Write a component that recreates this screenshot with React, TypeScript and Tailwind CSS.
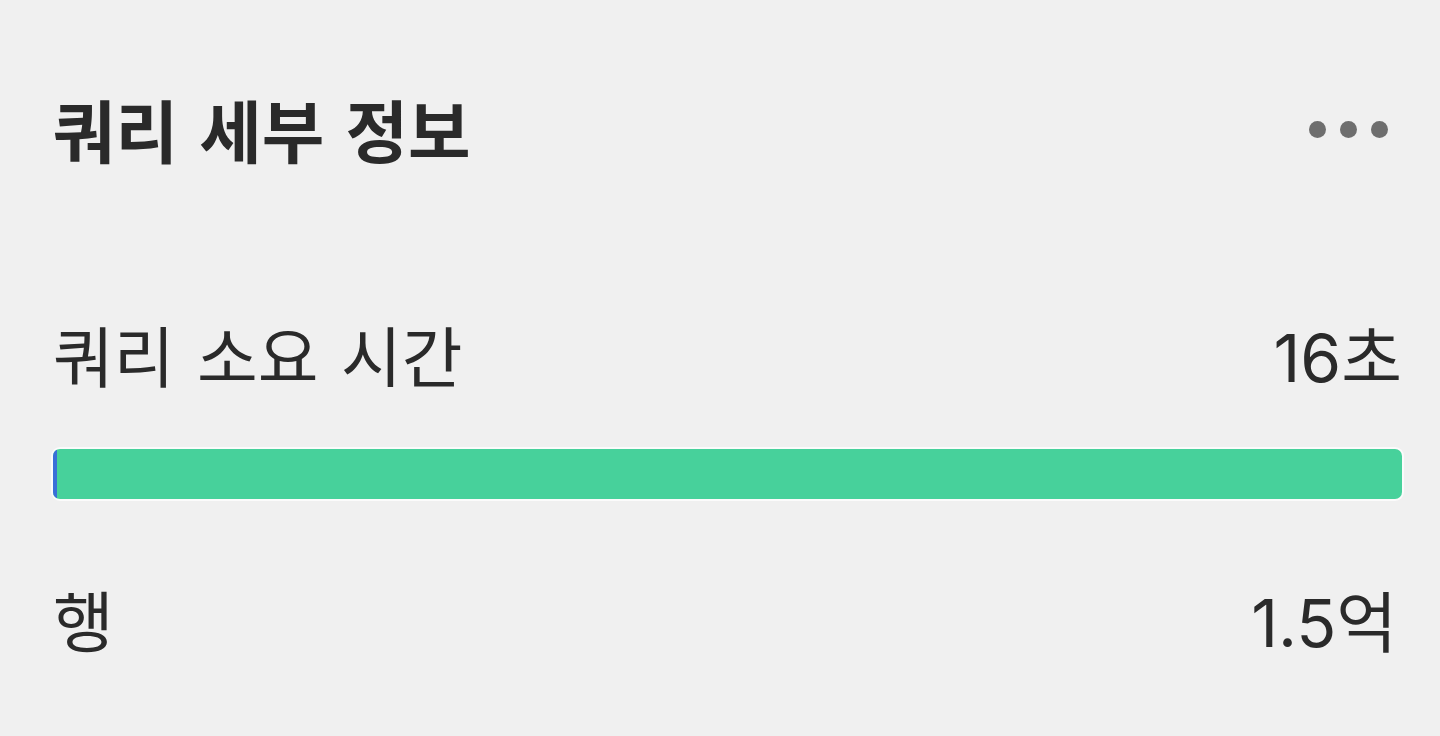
export default function App() {
  const font = { fontFamily: 'Inter, "Noto Sans CJK KR", "Noto Sans", sans-serif' };
  return (
    <div
      className="min-h-screen w-full bg-[#f0f0f0] pl-[53px] pr-[38px] pt-[97px] text-[#2a2a2a]"
      style={font}
    >
      {/* Header */}
      <div className="flex items-center justify-between">
        <h1 className="text-[68px] font-bold leading-[72px] [word-spacing:5px]">쿼리 세부 정보</h1>
        <div className="mb-[8px] mr-[14px] flex items-center gap-[14px]">
          <span className="h-[17px] w-[17px] rounded-full bg-[#6e6e6e]" />
          <span className="h-[17px] w-[17px] rounded-full bg-[#6e6e6e]" />
          <span className="h-[17px] w-[17px] rounded-full bg-[#6e6e6e]" />
        </div>
      </div>

      {/* Duration */}
      <div className="mt-[154px] flex items-center justify-between text-[66px] leading-[70px]">
        <span className="[word-spacing:4px]">쿼리 소요 시간</span>
        <span>16초</span>
      </div>

      <div className="mt-[56px] h-[50px] w-full overflow-hidden rounded-[7px] bg-[#47d19b] ring-2 ring-white/70">
        <div className="h-full w-[4px] bg-[#3a6fd8]" />
      </div>

      {/* Rows */}
      <div className="mt-[89px] flex items-center justify-between text-[66px] leading-[70px]">
        <span>행</span>
        <span className="mr-[5px]">1.5억</span>
      </div>
    </div>
  );
}
